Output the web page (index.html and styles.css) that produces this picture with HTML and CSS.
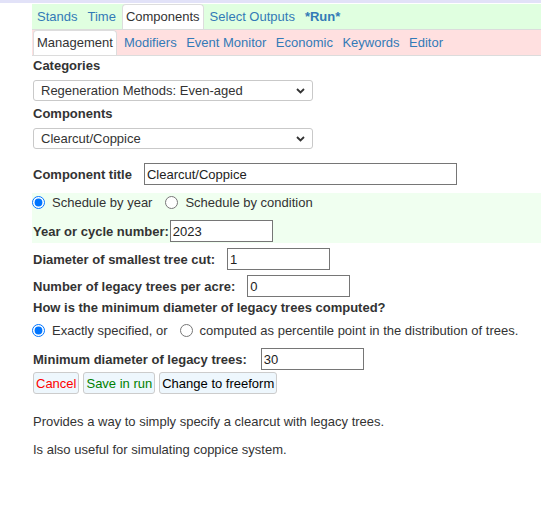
FILE: index.html
```html
<!DOCTYPE html>
<html>
<head>
<meta charset="utf-8">
<link rel="stylesheet" href="styles.css">
</head>
<body>
<div class="topstrip"></div>
<div class="page">
  <div class="tabbar green">
    <span class="tab">Stands</span>
    <span class="tab">Time</span>
    <span class="tab sel">Components</span>
    <span class="tab">Select Outputs</span>
    <span class="tab run">*Run*</span>
  </div>
  <div class="tabbar pink">
    <span class="tab sel">Management</span>
    <span class="tab">Modifiers</span>
    <span class="tab">Event Monitor</span>
    <span class="tab">Economic</span>
    <span class="tab">Keywords</span>
    <span class="tab">Editor</span>
  </div>

  <div class="content">
    <div class="label cat">Categories</div>
    <div class="selwrap">
      <select class="sel-box"><option>Regeneration Methods: Even-aged</option></select>
      <svg class="chev" width="9" height="6" viewBox="0 0 9 6"><path d="M1 1 L4.5 4.5 L8 1" fill="none" stroke="#333" stroke-width="1.8"/></svg>
    </div>
    <div class="label comp">Components</div>
    <div class="selwrap">
      <select class="sel-box"><option>Clearcut/Coppice</option></select>
      <svg class="chev" width="9" height="6" viewBox="0 0 9 6"><path d="M1 1 L4.5 4.5 L8 1" fill="none" stroke="#333" stroke-width="1.8"/></svg>
    </div>

    <div class="row title-row">
      <span class="label">Component title</span>
      <input class="inp wide" type="text" value="Clearcut/Coppice">
    </div>
  </div>

  <div class="band">
    <div class="radios">
      <input class="radio" type="radio" name="s" checked><span class="rtext">Schedule by year</span>
      <input class="radio" type="radio" name="s"><span class="rtext">Schedule by condition</span>
    </div>
    <div class="row year-row">
      <span class="label">Year or cycle number:</span>
      <input class="inp" type="text" value="2023">
    </div>
  </div>

  <div class="content">
    <div class="row diam-row">
      <span class="label">Diameter of smallest tree cut:</span>
      <input class="inp" type="text" value="1">
    </div>
    <div class="row legacy-row">
      <span class="label">Number of legacy trees per acre:</span>
      <input class="inp" type="text" value="0">
    </div>
    <div class="label how">How is the minimum diameter of legacy trees computed?</div>
    <div class="radios r2">
      <input class="radio" type="radio" name="m" checked><span class="rtext">Exactly specified, or</span>
      <input class="radio" type="radio" name="m"><span class="rtext">computed as percentile point in the distribution of trees.</span>
    </div>
    <div class="row min-row">
      <span class="label">Minimum diameter of legacy trees:</span>
      <input class="inp" type="text" value="30">
    </div>
    <div class="buttons">
      <button class="btn cancel">Cancel</button>
      <button class="btn save">Save in run</button>
      <button class="btn">Change to freeform</button>
    </div>
    <p class="desc first">Provides a way to simply specify a clearcut with legacy trees.</p>
    <p class="desc">Is also useful for simulating coppice system.</p>
  </div>
</div>
</body>
</html>
```
FILE: styles.css
```css
html, body {
  margin: 0;
  padding: 0;
  background: #fff;
}
body {
  font-family: "Liberation Sans", Arial, sans-serif;
  font-size: 13px;
  color: #333;
}
.topstrip {
  height: 3px;
  background: #e2e2f8;
  margin-bottom: 1px;
}
.page {
  padding-left: 32px;
}
.content {
  padding-left: 1px;
}
.tabbar {
  display: flex;
  align-items: flex-end;
  height: 25px;
  border-bottom: 1px solid #dcdcdc;
  padding-left: 1px;
}
.green { background: #e0ffe0; }
.pink { background: #ffe0e0; }
.tab {
  display: block;
  height: 24px;
  line-height: 23px;
  padding: 0 3px;
  border: 1px solid transparent;
  border-bottom: none;
  color: #337ab7;
  margin-right: 2px;
}
.pink .tab { margin-right: 1.5px; }
.tab.sel {
  background: #fff;
  color: #333;
  border-color: #ddd;
  border-radius: 4px 4px 0 0;
}
.pink .tab.sel {
  margin-right: 3px;
}
.tab.run { font-weight: bold; }

.label {
  font-weight: bold;
  color: #333;
  line-height: 15px;
}
.cat { margin-top: 2px; }
.comp { margin-top: 5px; }

.selwrap {
  position: relative;
  width: 280px;
  height: 21px;
  margin-top: 7px;
}
.sel-box {
  appearance: none;
  -webkit-appearance: none;
  width: 280px;
  height: 21px;
  box-sizing: border-box;
  border: 1px solid #c9c9c9;
  border-radius: 3px;
  background: #fff;
  font-family: "Liberation Sans", Arial, sans-serif;
  font-size: 13px;
  color: #333;
  padding: 0 0 0 7px;
  margin: 0;
}
.chev {
  position: absolute;
  right: 8px;
  top: 8px;
  pointer-events: none;
}

.row {
  display: flex;
  align-items: center;
  height: 22px;
}
.row .label { margin-right: 12px; }
.title-row { margin-top: 14px; }
.inp {
  box-sizing: border-box;
  height: 22px;
  width: 103px;
  border: 1px solid #767676;
  border-radius: 0;
  padding: 0 2px;
  margin: 0;
  font-family: "Liberation Sans", Arial, sans-serif;
  font-size: 13px;
  color: #222;
  background: #fff;
}
.inp.wide { width: 313px; }

.band {
  background: #f0fff0;
  margin-top: 8px;
  padding-bottom: 1px;
  padding-left: 1px;
}
.radios {
  display: flex;
  align-items: center;
  height: 18px;
}
.band .radios { margin-left: -1px; }
.radio {
  width: 13px;
  height: 13px;
  margin: 0 7px 0 0;
}
.rtext { margin-right: 13px; }
.r2 { margin-left: -1px; }
.r2 .rtext { margin-right: 12px; }
.year-row { margin-top: 9px; }
.year-row .label { margin-right: 1px; }

.diam-row { margin-top: 5px; }
.legacy-row { margin-top: 5px; }
.how { margin-top: 3px; line-height: 16px; }
.r2 { margin-top: 5px; }
.min-row { margin-top: 9px; }
.min-row .label { margin-right: 14px; }

.buttons {
  display: flex;
  gap: 4px;
  margin-top: 2px;
}
.btn {
  height: 22px;
  box-sizing: border-box;
  padding: 0 2px;
  border: 1px solid #ccc;
  border-radius: 3px;
  background: #eef7fd;
  font-family: "Liberation Sans", Arial, sans-serif;
  font-size: 13px;
  color: #000;
}
.btn.cancel { color: #ff0000; }
.btn.save { color: #008000; }

.desc {
  margin: 12px 0 0;
  line-height: 16px;
  color: #333;
}
.desc.first { margin-top: 20px; }
```
